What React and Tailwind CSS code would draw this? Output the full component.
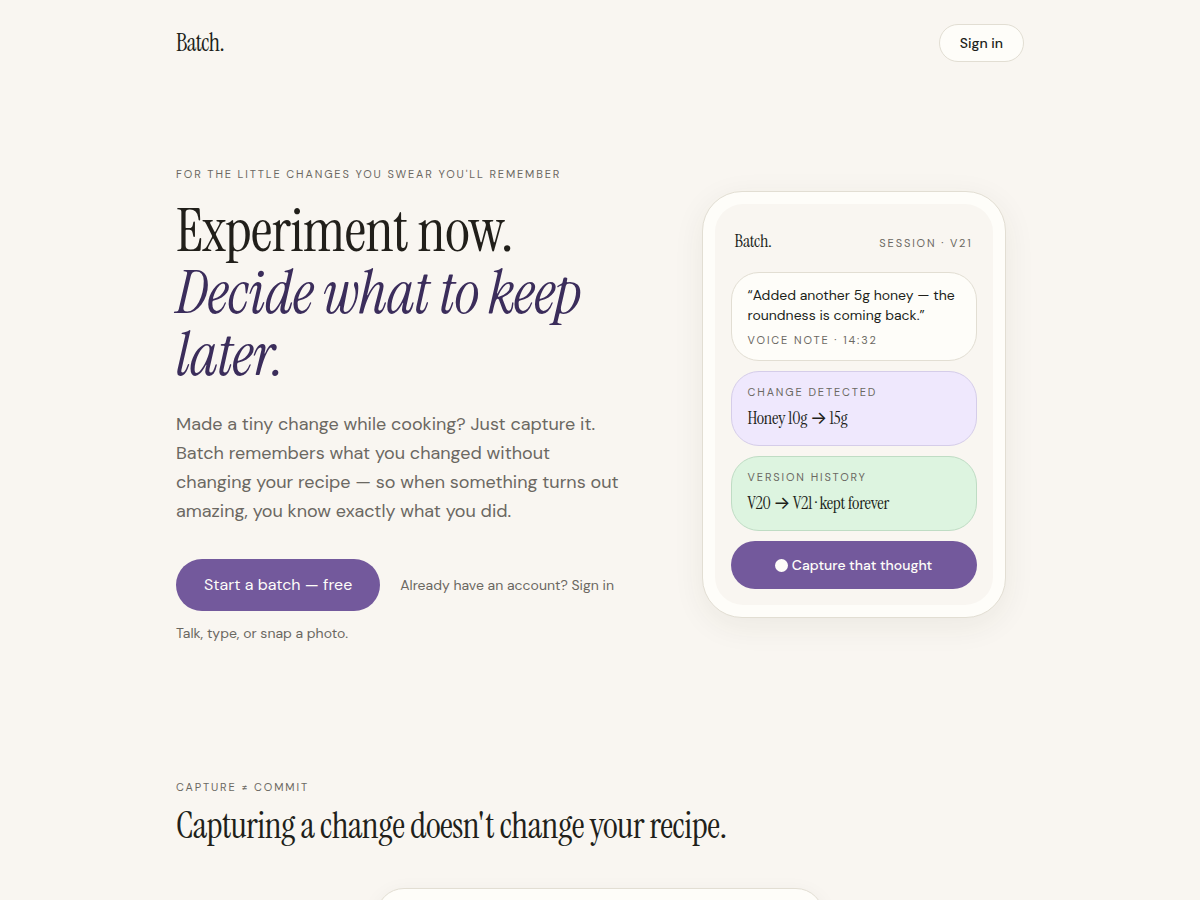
const SANS = "font-['DM_Sans','Open_Sans',sans-serif]";
const SERIF = "font-['Instrument_Serif','Inter','Liberation_Serif',serif]";

function Label({ as: Tag = "p", className = "", children }) {
  return (
    <Tag className={`text-[11px] leading-4 tracking-[0.17em] uppercase text-[#6b6862] ${className}`}>
      {children}
    </Tag>
  );
}

function Header() {
  return (
    <header className="mx-auto flex max-w-4xl items-center justify-between px-6 py-6">
      <a href="#" className={`${SERIF} text-2xl leading-8 tracking-tight`}>
        Batch.
      </a>
      <a
        href="#signin"
        className="rounded-full border border-[#e2ded3] bg-[#fefdf9] px-5 py-2 text-sm font-medium leading-5"
      >
        Sign in
      </a>
    </header>
  );
}

function PhoneCard({ className, children }) {
  return <div className={`rounded-[28px] border px-4 py-3 ${className}`}>{children}</div>;
}

function Phone() {
  return (
    <div className="mx-auto w-full max-w-[304px] rounded-[40px] border border-[#e2ded3] bg-[#fefdf9] p-3 shadow-[0_8px_32px_rgba(60,50,30,0.07)]">
      <div className="flex flex-col gap-[10px] rounded-[28px] bg-[#f9f6f1] p-4">
        <div className="flex items-baseline justify-between px-1 py-2">
          <span className={`${SERIF} text-lg leading-[26px] tracking-[-0.015em]`}>Batch.</span>
          <Label as="span">Session · v21</Label>
        </div>

        <PhoneCard className="border-[#e2ded3] bg-[#fefdf9]">
          <p className="text-sm leading-5">“Added another 5g honey — the roundness is coming back.”</p>
          <Label className="mt-[7px]">Voice note · 14:32</Label>
        </PhoneCard>

        <PhoneCard className="border-[#d5cde9] bg-[#efe8fd]">
          <Label>Change detected</Label>
          <p className={`${SERIF} mt-1 text-lg leading-[29px] tracking-[-0.015em]`}>Honey 10g → 15g</p>
        </PhoneCard>

        <PhoneCard className="border-[#bfdcc4] bg-[#ddf4e0]">
          <Label>Version history</Label>
          <p className={`${SERIF} mt-1 text-lg leading-[29px] tracking-[-0.015em]`}>
            V20 → V21 · kept forever
          </p>
        </PhoneCard>

        <button
          type="button"
          className="flex h-12 items-center justify-center gap-1 rounded-full bg-[#73599c] text-sm font-medium text-[#fefdf9]"
        >
          <span className="size-[13px] rounded-full bg-[#fefdf9]" />
          Capture that thought
        </button>
      </div>
    </div>
  );
}

function Hero() {
  return (
    <section className="mx-auto grid max-w-4xl items-center gap-16 px-6 pt-20 pb-[136px] md:grid-cols-[1.3fr_1fr]">
      <div>
        <Label>For the little changes you swear you'll remember</Label>
        <h1 className={`${SERIF} mt-[18px] text-6xl leading-[62px] tracking-[-0.01em]`}>
          Experiment now.
          <br />
          <em className="text-[#3b2d5b]">Decide what to keep later.</em>
        </h1>
        <p className="mt-6 text-lg leading-[29px] text-[#6b6862]">
          Made a tiny change while cooking? Just capture it. Batch remembers what you changed without
          changing your recipe — so when something turns out amazing, you know exactly what you did.
        </p>
        <div className="mt-[33px] flex flex-wrap items-center gap-x-5 gap-y-3 text-sm leading-5 text-[#6b6862]">
          <a
            href="#start"
            className="flex h-[52px] items-center rounded-full bg-[#73599c] px-7 text-base text-[#fefdf9]"
          >
            Start a batch — free
          </a>
          <a href="#signin">Already have an account? Sign in</a>
          <span>Talk, type, or snap a photo.</span>
        </div>
      </div>
      <Phone />
    </section>
  );
}

function CaptureSection() {
  return (
    <section className="mx-auto max-w-4xl px-6">
      <Label>Capture ≠ commit</Label>
      <h2 className={`${SERIF} mt-2 text-4xl leading-[46px] tracking-[-0.015em]`}>
        Capturing a change doesn't change your recipe.
      </h2>
      <div className="mx-auto mt-[39px] h-80 max-w-md rounded-[28px] border border-[#e2ded3] bg-[#fefdf9] shadow-[0_4px_20px_rgba(60,50,30,0.05)]" />
    </section>
  );
}

export default function App() {
  return (
    <main className={`${SANS} min-h-screen bg-[#f9f6f1] text-[#211f1a]`}>
      <Header />
      <Hero />
      <CaptureSection />
    </main>
  );
}
